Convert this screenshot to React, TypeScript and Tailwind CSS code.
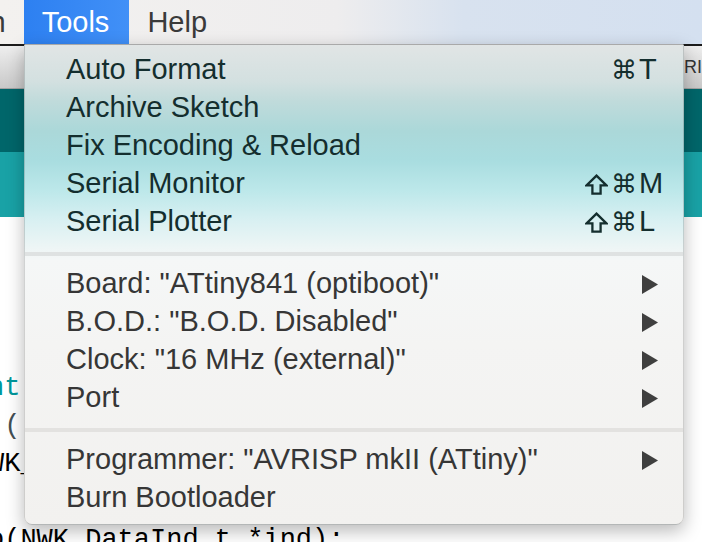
import { ReactNode } from "react";

type Item = {
  label: string;
  shift?: boolean;
  cmd?: boolean;
  k?: string;
  sub?: boolean;
};

const topItems: Item[] = [
  { label: "Auto Format", cmd: true, k: "T" },
  { label: "Archive Sketch" },
  { label: "Fix Encoding & Reload" },
  { label: "Serial Monitor", shift: true, cmd: true, k: "M" },
  { label: "Serial Plotter", shift: true, cmd: true, k: "L" },
];

const boardItems: Item[] = [
  { label: 'Board: "ATtiny841 (optiboot)"', sub: true },
  { label: 'B.O.D.: "B.O.D. Disabled"', sub: true },
  { label: 'Clock: "16 MHz (external)"', sub: true },
  { label: "Port", sub: true },
];

const progItems: Item[] = [
  { label: 'Programmer: "AVRISP mkII (ATtiny)"', sub: true },
  { label: "Burn Bootloader" },
];

// submenu triangle
function Arrow() {
  return (
    <svg width="16" height="19" viewBox="0 0 16 19" className="ml-[3px]">
      <polygon points="0,0 16,9.5 0,19" fill="#3f3f3f" />
    </svg>
  );
}

// shift key symbol
function ShiftIcon() {
  return (
    <svg width="23" height="21" viewBox="0 0 23 21" className="mr-[3px]" aria-label="⇧">
      <path
        d="M11.5 1.6 L21.4 11.4 H15.6 V19.6 H7.4 V11.4 H1.6 Z"
        fill="none"
        stroke="currentColor"
        strokeWidth="2.3"
        strokeLinejoin="miter"
      />
    </svg>
  );
}

function Row({ label, shift, cmd, k, sub }: Item) {
  return (
    <div className="flex h-[38px] items-center pl-[41px]">
      <span className="flex-1 whitespace-nowrap">{label}</span>
      <div className="flex w-[100px] items-center">
        <span className="flex w-[54px] items-center justify-end">
          {shift && <ShiftIcon />}
          {cmd && (
            <span className="font-['DejaVu_Sans',sans-serif] text-[26px] leading-[38px]">⌘</span>
          )}
        </span>
        <span className="flex flex-1 items-center pl-[2px]">
          {k}
          {sub && <Arrow />}
        </span>
      </div>
    </div>
  );
}

function Separator({ color }: { color: string }) {
  return (
    <div className="pt-[11px] pb-[9px]">
      <div className={`h-[4px] ${color}`}></div>
    </div>
  );
}

function MenuBar() {
  return (
    <div className="flex h-[44px] items-stretch bg-[linear-gradient(90deg,#f3f1ef_0%,#eeedee_48%,#d8e2ef_66%,#d4e0f0_100%)] text-[29px] leading-[44px] text-[#3a3a3a]">
      <div className="ml-[-101px] px-[18px]">Sketch</div>
      <div className="bg-[linear-gradient(90deg,#2d80f1,#4190f7)] pl-[18px] pr-[20px] text-white">
        Tools
      </div>
      <div className="px-[18px]">Help</div>
    </div>
  );
}

function CodeLine({ children }: { children?: ReactNode }) {
  return <div className="h-[38px] whitespace-pre">{children}</div>;
}

function Window() {
  return (
    <div className="flex flex-1 flex-col">
      <div className="h-[2px] bg-[#1c1c1c]"></div>
      <div className="flex h-[43px] items-center justify-end border-b border-[#a3a3a3] bg-[linear-gradient(180deg,#eeeeee,#c9c9c9)]">
        <span className="w-[18px] overflow-hidden whitespace-nowrap text-[18px] text-[#333]">
          RIII
        </span>
      </div>
      <div className="h-[63px] bg-[#00666a]"></div>
      <div className="h-[65px] bg-[#19a2a6]"></div>
      <div className="flex-1 bg-white pl-[4px] font-['Liberation_Mono',monospace] text-[27px] leading-[38px] text-black">
        <div className="ml-[-16px]">
          <CodeLine />
          <CodeLine />
          <CodeLine />
          <CodeLine />
          <CodeLine>
            <span className="text-[#00979c]">nt</span>
          </CodeLine>
          <CodeLine>
            <span className="text-[#434f54]"> (</span>
          </CodeLine>
          <CodeLine>WK_</CodeLine>
          <CodeLine />
          <CodeLine>o(NWK_DataInd_t *ind);</CodeLine>
        </div>
      </div>
    </div>
  );
}

function ToolsMenu() {
  return (
    <div className="absolute top-[44px] left-[24px] h-[481px] w-[660px] rounded-b-[8px] border-x border-t border-b border-x-black/15 border-t-[#a9a9a9] border-b-black/20 bg-[linear-gradient(180deg,#e1e5e5_0px,#d3e0e0_36px,#c0dbdb_56px,#abd8d9_86px,#a9dde0_116px,#bde8ea_146px,#d9f0f2_176px,#ecf5f5_201px,#f5f7f7_215px,#f4f4f3_300px,#f2f1ef_481px)] pt-[6px] text-[29px] shadow-[0_6px_18px_rgba(0,0,0,0.28)]">
      <div className="text-[#142e2e]">
        {topItems.map((it) => (
          <Row key={it.label} {...it} />
        ))}
      </div>
      <Separator color="bg-[#dfe2e2]" />
      <div className="text-[#363636]">
        {boardItems.map((it) => (
          <Row key={it.label} {...it} />
        ))}
      </div>
      <Separator color="bg-[#e3e2e0]" />
      <div className="text-[#363636]">
        {progItems.map((it) => (
          <Row key={it.label} {...it} />
        ))}
      </div>
    </div>
  );
}

export default function App() {
  return (
    <div className="relative flex h-[542px] w-[702px] flex-col overflow-hidden bg-white font-['Liberation_Sans',Arial,sans-serif]">
      <MenuBar />
      <Window />
      <ToolsMenu />
    </div>
  );
}
